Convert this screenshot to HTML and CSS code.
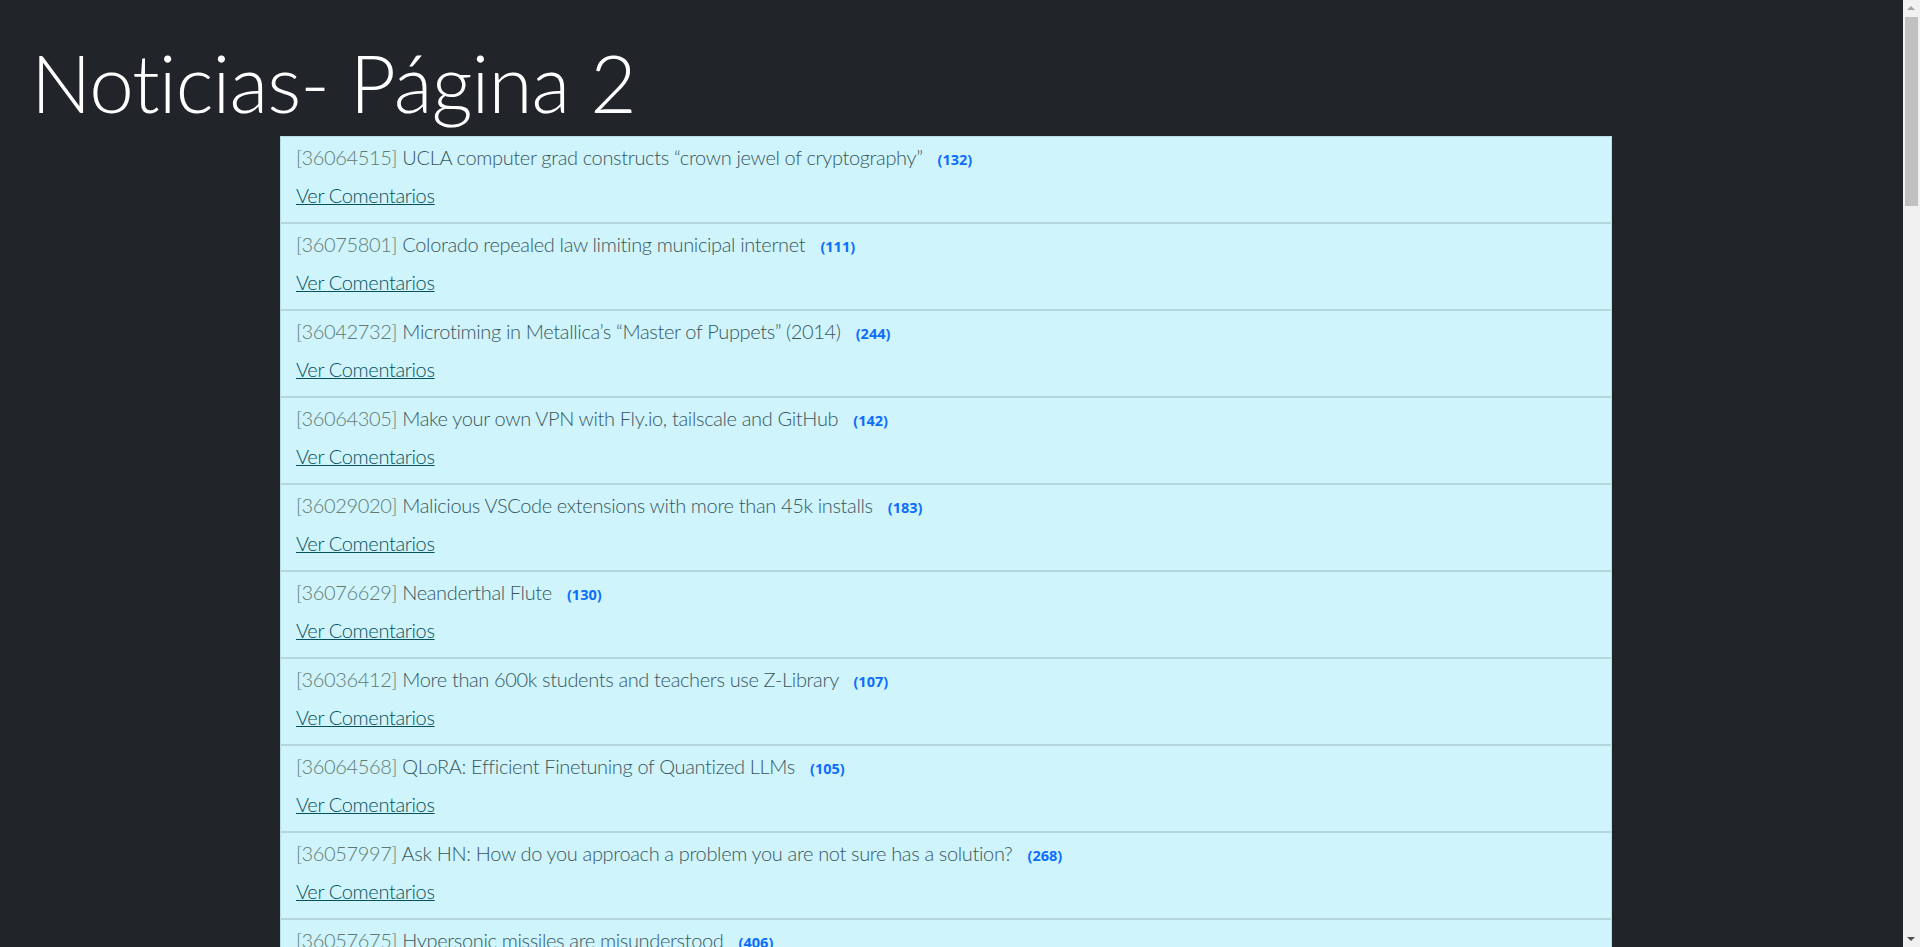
FILE: index.html
```html
<!DOCTYPE html>
<html lang="es">
<head>
<meta charset="utf-8">
<title>Noticias- Página 2</title>
<link rel="stylesheet" href="styles.css">
</head>
<body>
<main class="page">
  <h1 class="title">Noticias- Página 2</h1>
  <ul class="news">
    <li class="item"><p class="head"><span class="nid">[36064515]</span> UCLA computer grad constructs “crown jewel of cryptography” <span class="count">(132)</span></p><a class="link" href="#">Ver Comentarios</a></li>
    <li class="item"><p class="head"><span class="nid">[36075801]</span> Colorado repealed law limiting municipal internet <span class="count">(111)</span></p><a class="link" href="#">Ver Comentarios</a></li>
    <li class="item"><p class="head"><span class="nid">[36042732]</span> Microtiming in Metallica’s “Master of Puppets” (2014) <span class="count">(244)</span></p><a class="link" href="#">Ver Comentarios</a></li>
    <li class="item"><p class="head"><span class="nid">[36064305]</span> Make your own VPN with Fly.io, tailscale and GitHub <span class="count">(142)</span></p><a class="link" href="#">Ver Comentarios</a></li>
    <li class="item"><p class="head"><span class="nid">[36029020]</span> Malicious VSCode extensions with more than 45k installs <span class="count">(183)</span></p><a class="link" href="#">Ver Comentarios</a></li>
    <li class="item"><p class="head"><span class="nid">[36076629]</span> Neanderthal Flute <span class="count">(130)</span></p><a class="link" href="#">Ver Comentarios</a></li>
    <li class="item"><p class="head"><span class="nid">[36036412]</span> More than 600k students and teachers use Z-Library <span class="count">(107)</span></p><a class="link" href="#">Ver Comentarios</a></li>
    <li class="item"><p class="head"><span class="nid">[36064568]</span> QLoRA: Efficient Finetuning of Quantized LLMs <span class="count">(105)</span></p><a class="link" href="#">Ver Comentarios</a></li>
    <li class="item"><p class="head"><span class="nid">[36057997]</span> Ask HN: How do you approach a problem you are not sure has a solution? <span class="count">(268)</span></p><a class="link" href="#">Ver Comentarios</a></li>
    <li class="item"><p class="head"><span class="nid">[36057675]</span> Hypersonic missiles are misunderstood <span class="count">(406)</span></p><a class="link" href="#">Ver Comentarios</a></li>
    <li class="item"><p class="head"><span class="nid">[36067615]</span> Lawyer cites fake cases invented by ChatGPT, judge is not amused <span class="count">(351)</span></p><a class="link" href="#">Ver Comentarios</a></li>
    <li class="item"><p class="head"><span class="nid">[36058310]</span> The prospect of an AI winter <span class="count">(212)</span></p><a class="link" href="#">Ver Comentarios</a></li>
    <li class="item"><p class="head"><span class="nid">[36061824]</span> Windows 11 will natively support RAR, 7-zip and more <span class="count">(298)</span></p><a class="link" href="#">Ver Comentarios</a></li>
    <li class="item"><p class="head"><span class="nid">[36070125]</span> Nvidia reaches a $1T market cap <span class="count">(187)</span></p><a class="link" href="#">Ver Comentarios</a></li>
    <li class="item"><p class="head"><span class="nid">[36052040]</span> Show HN: A self-hosted search engine for your notes <span class="count">(64)</span></p><a class="link" href="#">Ver Comentarios</a></li>
    <li class="item"><p class="head"><span class="nid">[36049312]</span> The curse of recursion: training on generated data makes models forget <span class="count">(153)</span></p><a class="link" href="#">Ver Comentarios</a></li>
    <li class="item"><p class="head"><span class="nid">[36073982]</span> SQLite’s automatic indexes <span class="count">(48)</span></p><a class="link" href="#">Ver Comentarios</a></li>
    <li class="item"><p class="head"><span class="nid">[36066410]</span> How to write a good commit message <span class="count">(96)</span></p><a class="link" href="#">Ver Comentarios</a></li>
    <li class="item"><p class="head"><span class="nid">[36055821]</span> A history of the Unix terminal <span class="count">(72)</span></p><a class="link" href="#">Ver Comentarios</a></li>
    <li class="item"><p class="head"><span class="nid">[36068877]</span> Rust 1.70 released <span class="count">(121)</span></p><a class="link" href="#">Ver Comentarios</a></li>
    <li class="item"><p class="head"><span class="nid">[36060243]</span> The case against Daylight Saving Time <span class="count">(340)</span></p><a class="link" href="#">Ver Comentarios</a></li>
    <li class="item"><p class="head"><span class="nid">[36071306]</span> Ask HN: What is your favorite book on software design? <span class="count">(225)</span></p><a class="link" href="#">Ver Comentarios</a></li>
    <li class="item"><p class="head"><span class="nid">[36053194]</span> Building a tiny Linux distribution from scratch <span class="count">(58)</span></p><a class="link" href="#">Ver Comentarios</a></li>
    <li class="item"><p class="head"><span class="nid">[36062707]</span> Why the sky is dark at night <span class="count">(89)</span></p><a class="link" href="#">Ver Comentarios</a></li>
    <li class="item"><p class="head"><span class="nid">[36074450]</span> PostgreSQL 16 beta 1 released <span class="count">(77)</span></p><a class="link" href="#">Ver Comentarios</a></li>
    <li class="item"><p class="head"><span class="nid">[36048816]</span> The engineering behind a mechanical watch <span class="count">(43)</span></p><a class="link" href="#">Ver Comentarios</a></li>
    <li class="item"><p class="head"><span class="nid">[36069532]</span> Show HN: An open-source alternative to Notion <span class="count">(118)</span></p><a class="link" href="#">Ver Comentarios</a></li>
    <li class="item"><p class="head"><span class="nid">[36059968]</span> Why remote work is here to stay <span class="count">(402)</span></p><a class="link" href="#">Ver Comentarios</a></li>
    <li class="item"><p class="head"><span class="nid">[36065183]</span> A visual guide to SSH tunnels <span class="count">(35)</span></p><a class="link" href="#">Ver Comentarios</a></li>
    <li class="item"><p class="head"><span class="nid">[36072261]</span> The surprising economics of public libraries <span class="count">(66)</span></p><a class="link" href="#">Ver Comentarios</a></li>
  </ul>
</main>
<div class="scrollbar" aria-hidden="true">
  <div class="sb-arrow sb-up"></div>
  <div class="sb-track"><div class="sb-thumb"></div></div>
  <div class="sb-arrow sb-down"></div>
</div>
</body>
</html>
```

FILE: styles.css
```css
html, body {
  margin: 0;
  padding: 0;
  background: #212529;
}

.page {
  width: 1903px;
  padding: 34px 0 40px 0;
  font-family: Lato, "Open Sans", sans-serif;
}

.title {
  margin: 0 0 6px 0;
  padding-left: 31px;
  font-size: 80px;
  line-height: 96px;
  font-weight: 300;
  letter-spacing: -0.9px;
  color: #ffffff;
}

.news {
  list-style: none;
  margin: 0 0 0 280px;
  padding: 0;
  width: 1332px;
  border: 1px solid #b6dde6;
  border-bottom: 0;
  box-sizing: border-box;
}

.item {
  box-sizing: border-box;
  height: 87px;
  padding: 5px 16px 0 15px;
  background: #cff4fc;
  border-bottom: 2px solid #b6d6de;
  font-size: 20px;
  line-height: 30px;
  font-weight: 300;
  letter-spacing: -0.35px;
}

.head {
  margin: 0 0 5px 0;
  color: #38575e;
}

.nid {
  color: #5f7b74;
}

.count {
  padding: 0 0 0 10px;
  font-family: "Open Sans", sans-serif;
  font-size: 14.5px;
  font-weight: 700;
  letter-spacing: 0;
  color: #0d6efd;
}

.link {
  color: #055160;
  text-decoration: underline;
  text-decoration-thickness: 1px;
}

.scrollbar {
  position: fixed;
  top: 0;
  right: 0;
  width: 17px;
  height: 100vh;
  background: #f1f1f1;
  display: flex;
  flex-direction: column;
}

.sb-arrow {
  height: 17px;
  flex: none;
  position: relative;
}

.sb-up::after,
.sb-down::after {
  content: "";
  position: absolute;
  left: 4px;
  width: 0;
  height: 0;
  border-left: 4px solid transparent;
  border-right: 4px solid transparent;
}

.sb-up::after {
  top: 6px;
  border-bottom: 4px solid #a3a3a3;
}

.sb-down::after {
  top: 7px;
  border-top: 4px solid #505050;
}

.sb-track {
  flex: 1;
  padding: 0 2px;
}

.sb-thumb {
  height: 189px;
  background: #c1c1c1;
}
```
